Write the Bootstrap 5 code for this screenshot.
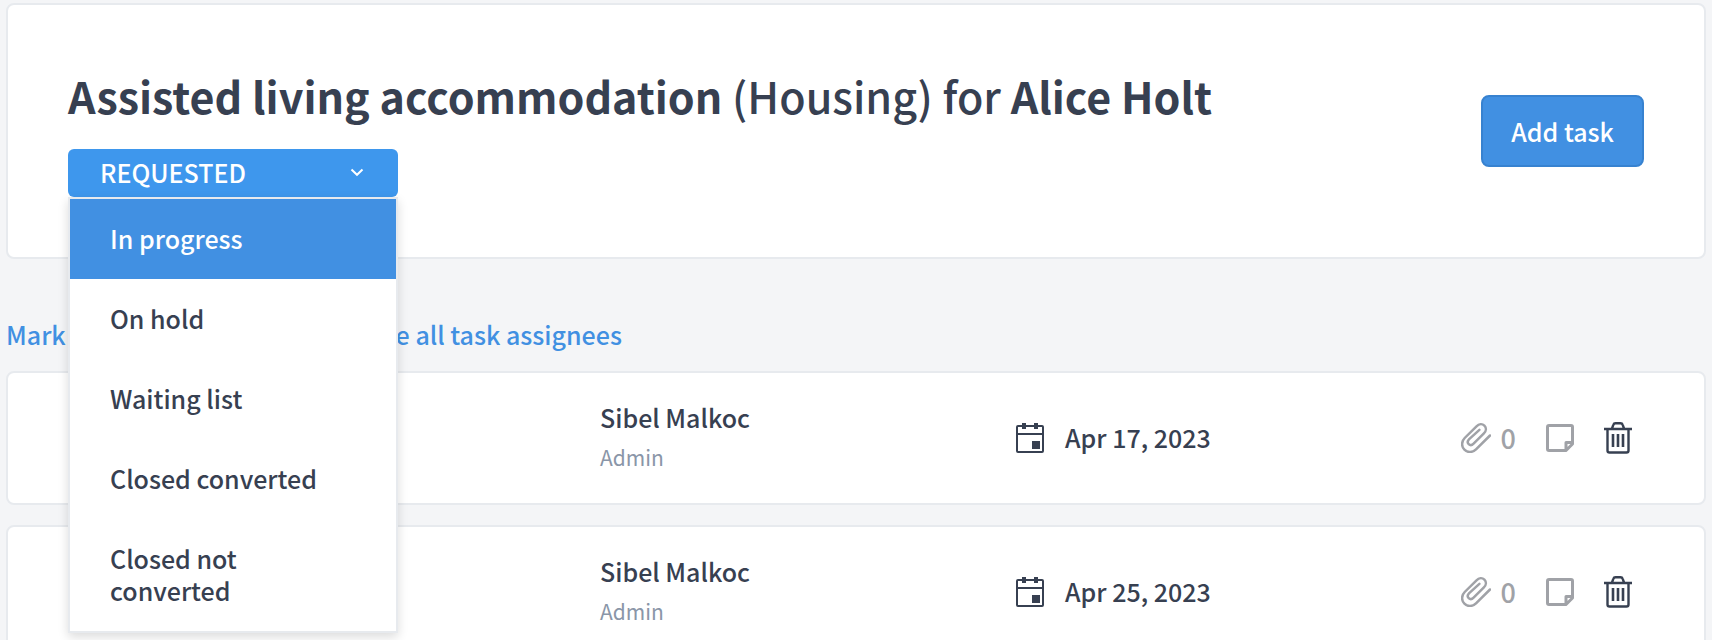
<!DOCTYPE html>
<html lang="en">
<head>
<meta charset="utf-8">
<meta name="viewport" content="width=device-width, initial-scale=1">
<title>Assisted living accommodation</title>
<link href="https://cdn.jsdelivr.net/npm/bootstrap@5.3.0/dist/css/bootstrap.min.css" rel="stylesheet">
<style>
  body {
    background: #f4f5f7;
    color: #374051;
    font: 500 25px/36px "Noto Sans CJK SC", "Noto Sans", sans-serif;
    padding: 3px 6px 20px;
  }
  .panel { background: #fff; border: 2px solid #e7eaee; border-radius: 8px; }
  .referral { padding: 60px; }
  .referral-title { font-size: 43px; line-height: 60px; font-weight: 500; margin: 0 0 24px; }
  .referral-title strong { font-weight: 700; }
  .status-picker { width: 330px; }
  .status-toggle {
    background: #3e97ed; color: #fff; border: 0; border-radius: 6px;
    height: 48px; padding: 0 34px 2px 32px; width: 100%; font-weight: 500;
  }
  .status-menu {
    top: 100%; width: 100%; margin: 0; padding: 0; font-size: 25px; border: 2px solid #e7eaee; border-radius: 0;
    box-shadow: 0 4px 10px rgba(0, 0, 0, .14);
  }
  .status-menu .dropdown-item {
    color: #374051; font-weight: 500; line-height: 32px; padding: 23px 40px 25px; white-space: normal;
  }
  .status-menu .dropdown-item.active { background: #4190e2; color: #fff; }
  .add-task {
    background: #4190e2; color: #fff; border: 2px solid #3782d0; border-radius: 8px;
    font-size: 25px; font-weight: 500; line-height: 36px; padding: 16px 28px;
  }
  .bulk-links { padding: 57px 0 19px; gap: 54px; }
  .bulk-links a { color: #4190e2; text-decoration: none; }
  .task-list { gap: 20px; }
  .task-row {
    display: grid; grid-template-columns: 133fr 104fr 154fr; align-items: center;
    min-height: 134px; padding: 0 72px 0 60px;
  }
  .role-text { color: #8a96a8; font-size: 21px; font-weight: 400; }
  .assignee { line-height: 40px; padding-bottom: 2px; }
  .due-date { gap: 21px; }
  .due-date span { padding-bottom: 2px; }
  .tools { gap: 30px; }
  .tool { background: none; border: 0; padding: 0; color: #374051; line-height: 36px; font-weight: 500; }
  .muted-tool.tool { color: #a0a2a7; }
  .file-count { gap: 10px; font-size: 27px; }
  svg { flex: none; display: block; }
</style>
</head>
<body>
<svg class="d-none" aria-hidden="true">
  <symbol id="calendar" viewBox="0 0 28 30">
    <rect x="1" y="3" width="26" height="26" rx="1" fill="none" stroke="currentColor" stroke-width="2"/>
    <path d="M1 11h26" stroke="currentColor" stroke-width="2"/>
    <path d="M6 0h4v6H6zM18 0h4v6h-4zM16 18h8v8h-8z" fill="currentColor"/>
  </symbol>
  <symbol id="clip" viewBox="0 0 30 30">
    <path d="M29 12.500 15 26.300C11.500 29.800 6.500 29.800 3.400 26.700C.300 23.600.300 18.500 3.700 15L15.500 3.300C18 .800 21.300.600 23.400 2.700C25.500 4.800 25.300 8 22.900 10.400L12.600 20.700C11 22.300 9 22.400 7.700 21.100C6.400 19.800 6.600 17.700 8.200 16.100L18.400 6.800" fill="none" stroke="currentColor" stroke-width="2.500" stroke-linecap="round"/>
  </symbol>
  <symbol id="note" viewBox="0 0 28 28">
    <path d="M20 26.500H3Q1.500 26.500 1.500 25V3Q1.500 1.500 3 1.500H25Q26.500 1.500 26.500 3V20L20 26.500V18.500H26.500" fill="none" stroke="currentColor" stroke-width="3" stroke-linejoin="round"/>
  </symbol>
  <symbol id="trash" viewBox="0 0 28 32">
    <path d="M0 7h28M3.500 7v21.500q0 2 2 2h17q2 0 2-2V7M8 6.500 9.300 2.800Q9.800 1.200 11.500 1.200h5q1.700 0 2.200 1.600L20 6.500" fill="none" stroke="currentColor" stroke-width="2.400"/>
    <path d="M9 12v13M14 12v13M19 12v13" stroke="currentColor" stroke-width="2.600"/>
  </symbol>
</svg>

<header class="panel referral d-flex align-items-center justify-content-between">
  <div>
    <h1 class="referral-title"><strong>Assisted living accommodation</strong> (Housing) for <strong>Alice Holt</strong></h1>
    <div class="status-picker dropdown">
      <button type="button" class="status-toggle d-flex align-items-center justify-content-between" aria-expanded="true" aria-haspopup="true">
        <span>REQUESTED</span>
        <svg width="14" height="9" viewBox="0 0 14 9" aria-hidden="true"><path d="m1.500 1.500 5.500 5.300 5.500-5.300" fill="none" stroke="currentColor" stroke-width="2"/></svg>
      </button>
      <div class="dropdown-menu show status-menu">
        <button type="button" class="dropdown-item active">In progress</button>
        <button type="button" class="dropdown-item">On hold</button>
        <button type="button" class="dropdown-item">Waiting list</button>
        <button type="button" class="dropdown-item">Closed converted</button>
        <button type="button" class="dropdown-item">Closed not converted</button>
      </div>
    </div>
  </div>
  <button type="button" class="btn add-task flex-shrink-0">Add task</button>
</header>

<nav class="bulk-links d-flex" aria-label="Bulk actions">
  <a href="#">Mark all as completed</a>
  <a href="#">Change all task assignees</a>
</nav>

<main class="task-list d-flex flex-column">
  <article class="panel task-row">
    <div></div>
    <div class="assignee"><div>Sibel Malkoc</div><div class="role-text">Admin</div></div>
    <div class="d-flex align-items-center justify-content-between">
      <div class="due-date d-flex align-items-center"><svg width="28" height="30" aria-hidden="true"><use href="#calendar"/></svg><span>Apr 17, 2023</span></div>
      <div class="tools d-flex align-items-center">
        <button type="button" class="tool muted-tool file-count d-flex align-items-center" aria-label="Attachments"><svg width="30" height="30"><use href="#clip"/></svg>0</button>
        <button type="button" class="tool muted-tool" aria-label="Note"><svg width="28" height="28"><use href="#note"/></svg></button>
        <button type="button" class="tool" aria-label="Delete"><svg width="28" height="32"><use href="#trash"/></svg></button>
      </div>
    </div>
  </article>
  <article class="panel task-row">
    <div></div>
    <div class="assignee"><div>Sibel Malkoc</div><div class="role-text">Admin</div></div>
    <div class="d-flex align-items-center justify-content-between">
      <div class="due-date d-flex align-items-center"><svg width="28" height="30" aria-hidden="true"><use href="#calendar"/></svg><span>Apr 25, 2023</span></div>
      <div class="tools d-flex align-items-center">
        <button type="button" class="tool muted-tool file-count d-flex align-items-center" aria-label="Attachments"><svg width="30" height="30"><use href="#clip"/></svg>0</button>
        <button type="button" class="tool muted-tool" aria-label="Note"><svg width="28" height="28"><use href="#note"/></svg></button>
        <button type="button" class="tool" aria-label="Delete"><svg width="28" height="32"><use href="#trash"/></svg></button>
      </div>
    </div>
  </article>
</main>
<script src="https://cdn.jsdelivr.net/npm/bootstrap@5.3.0/dist/js/bootstrap.bundle.min.js"></script>
</body>
</html>
